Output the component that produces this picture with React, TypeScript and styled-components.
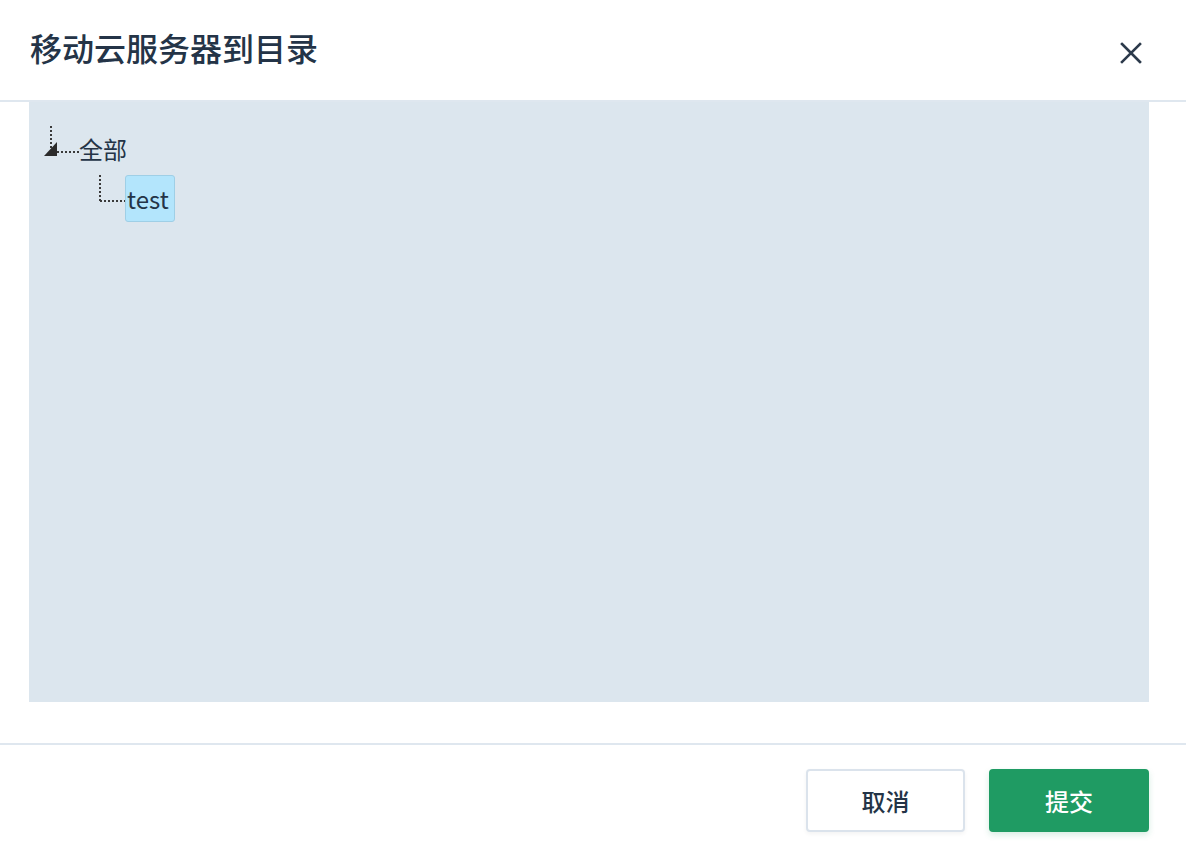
import styled, { createGlobalStyle } from 'styled-components';

const GlobalStyle = createGlobalStyle`
    html, body {
        margin: 0;
        padding: 0;
        background: #ffffff;
    }
    body {
        font-family: 'Noto Sans CJK SC', 'Noto Sans', sans-serif;
        color: #243447;
    }
`;

type TreeNodeProps = {
    label: string;
    level: number;
    root?: boolean;
    selected?: boolean;
};

const Connector = ({ root }: { root?: boolean }) => {
    if (root) {
        // open switch: dotted elbow + dark corner triangle
        return (
            <svg width='35' height='30' viewBox='0 0 35 30'>
                <line x1='7' y1='0' x2='7' y2='24' stroke='#3a3a3a' strokeWidth='2' strokeDasharray='2 2' />
                <line x1='13' y1='26' x2='35' y2='26' stroke='#3a3a3a' strokeWidth='2' strokeDasharray='2 2' />
                <polygon points='0,30 13,30 13,16' fill='#2b2b2b' />
            </svg>
        );
    }
    return (
        <svg width='26' height='27' viewBox='0 0 26 27'>
            <line x1='1' y1='0' x2='1' y2='26' stroke='#3a3a3a' strokeWidth='2' strokeDasharray='2 2' />
            <line x1='1' y1='26' x2='26' y2='26' stroke='#3a3a3a' strokeWidth='2' strokeDasharray='2 2' />
        </svg>
    );
};

const TreeNode = ({ label, level, root, selected }: TreeNodeProps) => (
    <Node $level={level}>
        <Switch>
            <Connector root={root} />
        </Switch>
        <Label $selected={selected}>{label}</Label>
    </Node>
);

export default function App() {
    return (
        <Dialog>
            <GlobalStyle />
            <Header>
                <Title>移动云服务器到目录</Title>
                <Close aria-label='close'>
                    <svg width='22' height='22' viewBox='0 0 22 22'>
                        <path d='M2 2 L20 20 M20 2 L2 20' stroke='#2c3a4b' strokeWidth='2.6' strokeLinecap='square' />
                    </svg>
                </Close>
            </Header>
            <Body>
                <Panel>
                    <TreeNode label='全部' level={0} root={true} />
                    <TreeNode label='test' level={1} selected={true} />
                </Panel>
            </Body>
            <Footer>
                <Button>取消</Button>
                <Button $primary={true}>提交</Button>
            </Footer>
        </Dialog>
    );
}

const Dialog = styled.div`
    width: 1186px;
    height: 854px;
    display: flex;
    flex-direction: column;
    background: #fff;
`;

const Header = styled.div`
    height: 102px;
    box-sizing: border-box;
    padding: 23px 44px 0 30px;
    display: flex;
    justify-content: space-between;
    align-items: flex-start;
    border-bottom: 2px solid #dfe7ef;
`;

const Title = styled.h1`
    margin: 0;
    font-size: 32px;
    line-height: 48px;
    font-weight: 500;
    color: #243447;
`;

const Close = styled.button`
    margin-top: 19px;
    width: 22px;
    height: 22px;
    padding: 0;
    border: none;
    background: none;
    display: flex;
    cursor: pointer;
`;

const Body = styled.div`
    padding: 0 37px 41px 29px;
`;

const Panel = styled.div`
    height: 600px;
    box-sizing: border-box;
    background: #dce6ee;
    padding-top: 24px;
    display: flex;
    flex-direction: column;
`;

const Node = styled.div<{ $level: number }>`
    display: flex;
    align-items: flex-start;
    padding-left: ${(p) => 15 + p.$level * 55}px;
    margin-top: ${(p) => (p.$level === 0 ? 0 : 11)}px;
`;

const Switch = styled.span`
    display: flex;
`;

const Label = styled.span<{ $selected?: boolean }>`
    font-size: 24px;
    line-height: ${(p) => (p.$selected ? '45px' : '30px')};
    margin-top: ${(p) => (p.$selected ? '0' : '8px')};
    padding: ${(p) => (p.$selected ? '0 5px 0 1px' : '0')};
    color: #243447;
    background: ${(p) => (p.$selected ? '#b3e5fc' : 'transparent')};
    border: ${(p) => (p.$selected ? '1px solid #9fcfe6' : 'none')};
    border-radius: 3px;
`;

const Footer = styled.div`
    border-top: 2px solid #dfe7ef;
    padding: 24px 37px 0 0;
    display: flex;
    justify-content: flex-end;
    gap: 24px;
`;

const Button = styled.button<{ $primary?: boolean }>`
    width: ${(p) => (p.$primary ? 160 : 159)}px;
    height: 63px;
    box-sizing: border-box;
    border-radius: 4px;
    font-family: 'Noto Sans CJK SC', sans-serif;
    font-size: 24px;
    font-weight: 500;
    cursor: pointer;
    color: ${(p) => (p.$primary ? '#ffffff' : '#243447')};
    background: ${(p) => (p.$primary ? '#1f9b63' : '#ffffff')};
    border: 2px solid ${(p) => (p.$primary ? '#1f9b63' : '#dbe3ec')};
    box-shadow: ${(p) => (p.$primary ? '0 3px 6px rgba(31, 155, 99, 0.18)' : '0 2px 4px rgba(0, 0, 0, 0.05)')};
`;
